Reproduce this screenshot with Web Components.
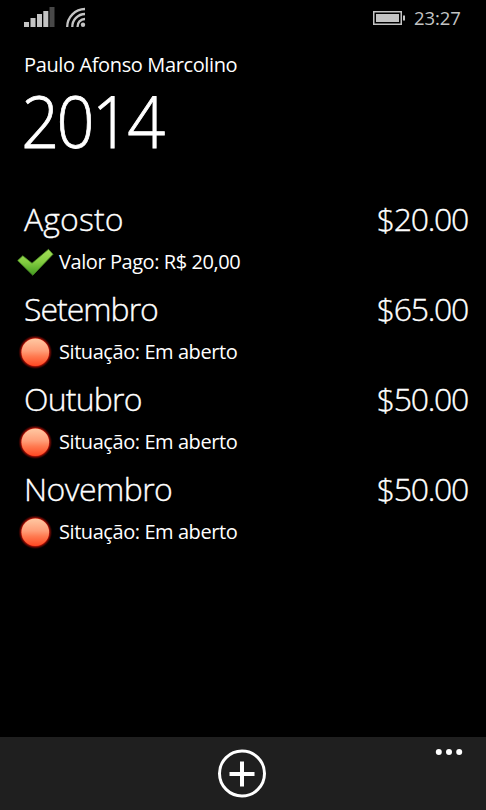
<!DOCTYPE html>
<html lang="pt-BR">
<head>
<meta charset="utf-8">
<title>2014</title>
<style>
  html, body {
    height: 100%;
    margin: 0;
    background: #000;
  }
  body {
    overflow: hidden;
    color: #fff;
    font-family: "Open Sans", "Noto Sans", sans-serif;
  }
</style>
</head>
<body>
<phone-page>
  <status-bar slot="status" data-time="23:27"></status-bar>
  <page-header slot="header" data-name="Paulo Afonso Marcolino" data-title="2014"></page-header>
  <month-item data-month="Agosto" data-value="$20.00" data-state="paid" style="--month-gap: 0.1px">Valor Pago: R$ 20,00</month-item>
  <month-item data-month="Setembro" data-value="$65.00" data-state="open" style="--month-gap: -1px">Situação: Em aberto</month-item>
  <month-item data-month="Outubro" data-value="$50.00" data-state="open" style="--month-gap: -0.8px">Situação: Em aberto</month-item>
  <month-item data-month="Novembro" data-value="$50.00" data-state="open" style="--month-gap: -0.55px">Situação: Em aberto</month-item>
  <app-bar slot="appbar"></app-bar>
</phone-page>

<script>
/**
 * Page frame: status bar, header, list and application bar.
 */
class PhonePage extends HTMLElement {
  constructor() {
    super();
    const shadow = this.attachShadow({ mode: 'open' });
    shadow.innerHTML = `
      <style>
        :host {
          display: flex;
          flex-direction: column;
          width: 100%;
          height: 100vh;
          background: #000;
        }
        main {
          flex: 1;
          padding: 39px 18px 0 18px;
        }
      </style>
      <slot name="status"></slot>
      <slot name="header"></slot>
      <main><slot></slot></main>
      <slot name="appbar"></slot>
    `;
  }
}

/**
 * System tray with signal, wifi, battery and clock.
 */
class StatusBar extends HTMLElement {
  constructor() {
    super();
    const shadow = this.attachShadow({ mode: 'open' });
    shadow.innerHTML = `
      <style>
        :host {
          display: flex;
          align-items: flex-start;
          height: 36px;
          padding: 0 24px;
          box-sizing: border-box;
          color: #c4c4c4;
        }
        svg {
          display: block;
          fill: currentColor;
        }
        .wifi {
          margin-left: 10px;
        }
        .battery {
          margin-left: auto;
        }
        .time {
          width: 48px;
          margin-left: 8px;
          font-size: 18.5px;
          line-height: 35px;
          letter-spacing: -0.1px;
          white-space: nowrap;
        }
      </style>
      <svg width="32" height="36" viewBox="0 0 32 36">
        <rect x="0" y="22" width="5" height="5"/>
        <rect x="6.5" y="18" width="5" height="9"/>
        <rect x="13" y="14" width="5" height="13"/>
        <rect x="19.3" y="11" width="5" height="16"/>
        <rect x="25.5" y="7" width="5" height="20" fill="#484848"/>
      </svg>
      <svg class="wifi" width="20" height="36" viewBox="0 0 20 36">
        <circle cx="17" cy="24.8" r="2.2"/>
        <g fill="none" stroke="currentColor" stroke-width="2.3">
          <path d="M11.5 27A7.5 7.5 0 0 1 19 19"/>
          <path d="M6.3 27A12.8 12.8 0 0 1 19 14"/>
          <path d="M1.2 27A18 18 0 0 1 19 9"/>
        </g>
      </svg>
      <svg class="battery" width="34" height="36" viewBox="0 0 34 36">
        <rect x="1.75" y="11.75" width="27.5" height="12.5" fill="none" stroke="currentColor" stroke-width="1.5"/>
        <rect x="4" y="14" width="23" height="8"/>
        <rect x="31" y="15.5" width="2" height="5"/>
      </svg>
      <span class="time"></span>
    `;
    this._time = shadow.querySelector('.time');
  }

  connectedCallback() {
    this._time.textContent = this.getAttribute('data-time') || '';
  }
}

/**
 * Customer name above the large year title.
 */
class PageHeader extends HTMLElement {
  constructor() {
    super();
    const shadow = this.attachShadow({ mode: 'open' });
    shadow.innerHTML = `
      <style>
        :host {
          display: block;
          padding: 14px 24px 0;
          white-space: nowrap;
        }
        p, h1 {
          margin: 0;
        }
        p {
          font-size: 20px;
          line-height: 30px;
          letter-spacing: -0.37px;
        }
        h1 {
          margin-left: -3px;
          font-size: 72px;
          font-weight: 300;
          line-height: 80px;
          letter-spacing: -2.9px;
          -webkit-text-stroke: 0.8px currentColor;
          transform: scaleX(0.925);
          transform-origin: 3px 0;
        }
      </style>
      <p></p>
      <h1></h1>
    `;
    this._name = shadow.querySelector('p');
    this._title = shadow.querySelector('h1');
  }

  connectedCallback() {
    this._name.textContent = this.getAttribute('data-name') || '';
    this._title.textContent = this.getAttribute('data-title') || '';
  }
}

/**
 * Payment state icon: green tick when paid, red ball when open.
 */
class StateIcon extends HTMLElement {
  static get observedAttributes() {
    return ['data-state'];
  }

  constructor() {
    super();
    this.attachShadow({ mode: 'open' });
  }

  attributeChangedCallback(name, oldValue, newValue) {
    const paid = `
      <defs>
        <linearGradient id="tick" x1="0" y1="0" x2="0" y2="1">
          <stop offset="0" stop-color="#a4dc58"/>
          <stop offset="0.5" stop-color="#82cc40"/>
          <stop offset="1" stop-color="#429a20"/>
        </linearGradient>
      </defs>
      <path d="M-0.3 17.5L4.8 12.8L14 20.3L30.5 6.3L35 11.3L14.8 32.3Z" fill="url(#tick)" stroke="#4c8f26" stroke-width="0.8" stroke-linejoin="round"/>
    `;
    const open = `
      <defs>
        <linearGradient id="ball" x1="0" y1="0" x2="0" y2="1">
          <stop offset="0" stop-color="#ffc8a2"/>
          <stop offset="0.45" stop-color="#ff9e78"/>
          <stop offset="0.65" stop-color="#ff7a50"/>
          <stop offset="1" stop-color="#ff4822"/>
        </linearGradient>
        <radialGradient id="glow">
          <stop offset="0.8" stop-color="#d81808"/>
          <stop offset="1" stop-color="#600000" stop-opacity="0"/>
        </radialGradient>
      </defs>
      <circle cx="17.3" cy="19.2" r="17" fill="url(#glow)"/>
      <circle cx="17.3" cy="19.2" r="13.8" fill="url(#ball)"/>
    `;
    this.shadowRoot.innerHTML = `
      <style>
        :host { display: block; width: 36px; height: 36px; }
        svg { display: block; overflow: visible; }
      </style>
      <svg width="36" height="36" viewBox="0 0 36 36">${newValue === 'paid' ? paid : open}</svg>
    `;
  }
}

/**
 * One month: name and value on the first line, state on the second.
 */
class MonthItem extends HTMLElement {
  constructor() {
    super();
    const shadow = this.attachShadow({ mode: 'open' });
    shadow.innerHTML = `
      <style>
        :host {
          display: block;
          height: 90px;
          white-space: nowrap;
        }
        .line {
          display: flex;
          justify-content: space-between;
          height: 44px;
          padding-left: 6px;
          font-size: 32px;
          font-weight: 300;
          line-height: 40px;
          -webkit-text-stroke: 0.35px currentColor;
        }
        .month {
          letter-spacing: var(--month-gap, -0.5px);
        }
        .value {
          letter-spacing: -1.3px;
        }
        .state {
          display: flex;
          align-items: center;
          gap: 5px;
          height: 36px;
          font-size: 20px;
          letter-spacing: -0.43px;
        }
      </style>
      <div class="line">
        <span class="month"></span>
        <span class="value"></span>
      </div>
      <div class="state">
        <state-icon></state-icon>
        <span><slot></slot></span>
      </div>
    `;
    this._month = shadow.querySelector('.month');
    this._value = shadow.querySelector('.value');
    this._icon = shadow.querySelector('state-icon');
  }

  connectedCallback() {
    this._month.textContent = this.getAttribute('data-month') || '';
    this._value.textContent = this.getAttribute('data-value') || '';
    this._icon.setAttribute('data-state', this.getAttribute('data-state') || 'open');
  }
}

/**
 * Bottom application bar with the add button and the menu dots.
 */
class AppBar extends HTMLElement {
  constructor() {
    super();
    const shadow = this.attachShadow({ mode: 'open' });
    shadow.innerHTML = `
      <style>
        :host {
          display: grid;
          grid-template-columns: 1fr 50px 1fr;
          height: 73px;
          padding-right: 2px;
          box-sizing: border-box;
          background: #1f1f1f;
        }
        button {
          padding: 0;
          border: 0;
          background: none;
          color: #fff;
        }
        svg {
          display: block;
        }
        .add {
          grid-column: 2;
          align-self: start;
          padding-top: 11px;
        }
        .more {
          justify-self: end;
          align-self: start;
          padding: 11px 21px 0 0;
        }
      </style>
      <button class="add" aria-label="Adicionar">
        <svg width="50" height="50" viewBox="0 0 50 50" fill="none" stroke="currentColor">
          <circle cx="25" cy="25.5" r="22.5" stroke-width="3"/>
          <path d="M25 13.5v25M12.5 26h25" stroke-width="4"/>
        </svg>
      </button>
      <button class="more" aria-label="Mais">
        <svg width="28" height="8" viewBox="0 0 28 8" fill="currentColor">
          <circle cx="3.8" cy="4" r="3"/>
          <circle cx="14" cy="4" r="3"/>
          <circle cx="24.2" cy="4" r="3"/>
        </svg>
      </button>
    `;
  }
}

customElements.define('phone-page', PhonePage);
customElements.define('status-bar', StatusBar);
customElements.define('page-header', PageHeader);
customElements.define('state-icon', StateIcon);
customElements.define('month-item', MonthItem);
customElements.define('app-bar', AppBar);
</script>
</body>
</html>
